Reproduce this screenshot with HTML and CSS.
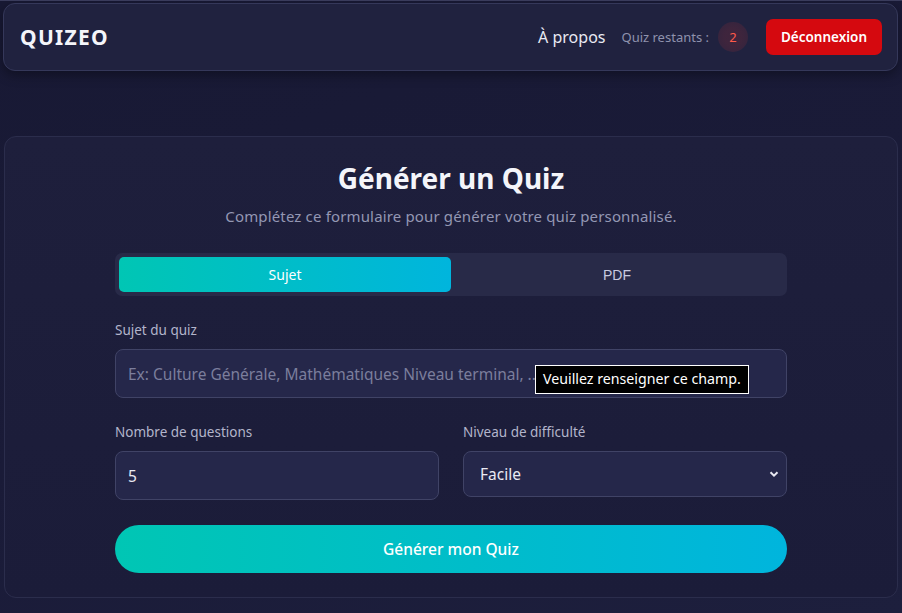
FILE: index.html
```html
<!DOCTYPE html>
<html lang="fr">
<head>
<meta charset="utf-8">
<title>Quizeo</title>
<link rel="stylesheet" href="styles.css">
</head>
<body>
<header class="navbar">
  <div class="brand">QUIZEO</div>
  <nav class="nav-right">
    <a class="nav-link" href="#">À propos</a>
    <span class="remaining">Quiz restants :</span>
    <span class="badge">2</span>
    <button class="logout">Déconnexion</button>
  </nav>
</header>
<main class="card">
  <h1 class="title">Générer un Quiz</h1>
  <p class="subtitle">Complétez ce formulaire pour générer votre quiz personnalisé.</p>
  <div class="form">
    <div class="tabs">
      <button class="tab active">Sujet</button>
      <button class="tab pdf">PDF</button>
    </div>
    <div class="field">
      <label class="label">Sujet du quiz</label>
      <div class="input-wrap">
        <input class="input" type="text" placeholder="Ex: Culture Générale, Mathématiques Niveau terminal, ...">
        <div class="tooltip">Veuillez renseigner ce champ.</div>
      </div>
    </div>
    <div class="row">
      <div class="field">
        <label class="label">Nombre de questions</label>
        <input class="input" type="text" value="5">
      </div>
      <div class="field">
        <label class="label">Niveau de difficulté</label>
        <div class="select">
          <span>Facile</span>
          <svg width="10" height="8" viewBox="0 0 10 8"><path d="M1.5 2.2 L5 5.6 L8.5 2.2" fill="none" stroke="#e8e9f2" stroke-width="2"/></svg>
        </div>
      </div>
    </div>
    <button class="submit">Générer mon Quiz</button>
  </div>
</main>
</body>
</html>
```
FILE: styles.css
```css
* { box-sizing: border-box; }
html, body { margin: 0; padding: 0; }
body {
  width: 902px;
  height: 613px;
  overflow: hidden;
  background: linear-gradient(160deg, #181934 0%, #1a1b38 50%, #1d1f3d 100%);
  font-family: "Noto Sans", "Open Sans", sans-serif;
  color: #ffffff;
  padding: 3px 4px 0 3px;
  border-top: 1px solid #3a3c5c;
}
.navbar {
  height: 68px;
  margin-top: -1px;
  background: #20223f;
  border: 1px solid #35385a;
  border-radius: 12px;
  display: flex;
  align-items: center;
  justify-content: space-between;
  padding: 0 15px 0 16px;
  box-shadow: 0 4px 12px rgba(0,0,0,0.35);
}
.brand {
  font-size: 21px;
  font-weight: 700;
  letter-spacing: 1.3px;
  color: #f4f5fa;
}
.nav-right {
  display: flex;
  align-items: center;
}
.nav-link {
  color: #e9eaf3;
  text-decoration: none;
  font-size: 16px;
  margin-right: 16px;
}
.remaining {
  color: #8f92ad;
  font-size: 13px;
  margin-right: 9px;
}
.badge {
  width: 30px;
  height: 30px;
  border-radius: 50%;
  display: flex;
  align-items: center;
  justify-content: center;
  color: #ff5a4a;
  font-size: 13px;
  background: radial-gradient(circle, rgba(200,50,50,0.18) 40%, rgba(200,50,50,0.1) 100%);
  margin-right: 18px;
}
.logout {
  background: #d5090f;
  color: #fff;
  border: none;
  border-radius: 7px;
  height: 36px;
  width: 116px;
  padding: 0;
  font-family: inherit;
  font-weight: 600;
  font-size: 13.5px;
}
.card {
  margin: 65px 0 0 1px;
  height: 462px;
  background: linear-gradient(180deg, #1e1f3c 0%, #1b1c39 100%);
  border: 1px solid #2b2d4c;
  border-radius: 12px;
  padding: 21px 110px 0 110px;
  display: flex;
  flex-direction: column;
  align-items: stretch;
}
.title {
  margin: 0;
  text-align: center;
  font-size: 28px;
  font-weight: 700;
  line-height: 40px;
  color: #f4f5fa;
}
.subtitle {
  margin: 7px 0 0;
  text-align: center;
  color: #9497b3;
  font-size: 15px;
  letter-spacing: 0.15px;
  line-height: 22px;
}
.form {
  display: flex;
  flex-direction: column;
}
.tabs {
  margin-top: 26px;
  height: 43px;
  background: #282a48;
  border-radius: 7px;
  padding: 4px;
  display: flex;
  gap: 0;
}
.tab {
  flex: 1;
  border: none;
  border-radius: 5px;
  background: transparent;
  font-size: 14px;
  color: #c9cbe0;
}
.tab.active {
  background: linear-gradient(90deg, #00c6b4 0%, #00b5dd 100%);
  color: #fff;
  font-family: "Noto Sans", sans-serif;
}
.tab.pdf {
  font-family: "Liberation Sans", Arial, sans-serif;
}
.field {
  display: flex;
  flex-direction: column;
  flex: 1;
}
.form > .field { margin-top: 24px; }
.label {
  font-size: 13.5px;
  color: #b3b5cb;
  line-height: 20px;
  margin-bottom: 9px;
}
.input-wrap { position: relative; }
.input {
  width: 100%;
  height: 49px;
  background: #25274a;
  border: 1px solid #404366;
  border-radius: 8px;
  padding: 0 12px;
  font-family: inherit;
  font-size: 15.5px;
  color: #e9eaf3;
  outline: none;
}
.input::placeholder { color: #7b7e9c; }
.tooltip {
  position: absolute;
  left: 420px;
  top: 16px;
  background: #000;
  border: 1px solid #fff;
  color: #fff;
  font-size: 14.2px;
  padding: 3px 7px 4px;
  line-height: 20px;
  white-space: nowrap;
}
.row {
  display: flex;
  gap: 24px;
  margin-top: 24px;
}
.select {
  height: 46px;
  background: #25274a;
  border: 1px solid #404366;
  border-radius: 8px;
  padding: 0 7px 0 16px;
  display: flex;
  align-items: center;
  justify-content: space-between;
  font-size: 15.5px;
  color: #e9eaf3;
}
.submit {
  margin-top: 25px;
  height: 48px;
  border: none;
  border-radius: 24px;
  background: linear-gradient(90deg, #00c6b4 0%, #00b5dd 100%);
  color: #fff;
  font-family: inherit;
  font-size: 15.5px;
  font-weight: 500;
}
```
